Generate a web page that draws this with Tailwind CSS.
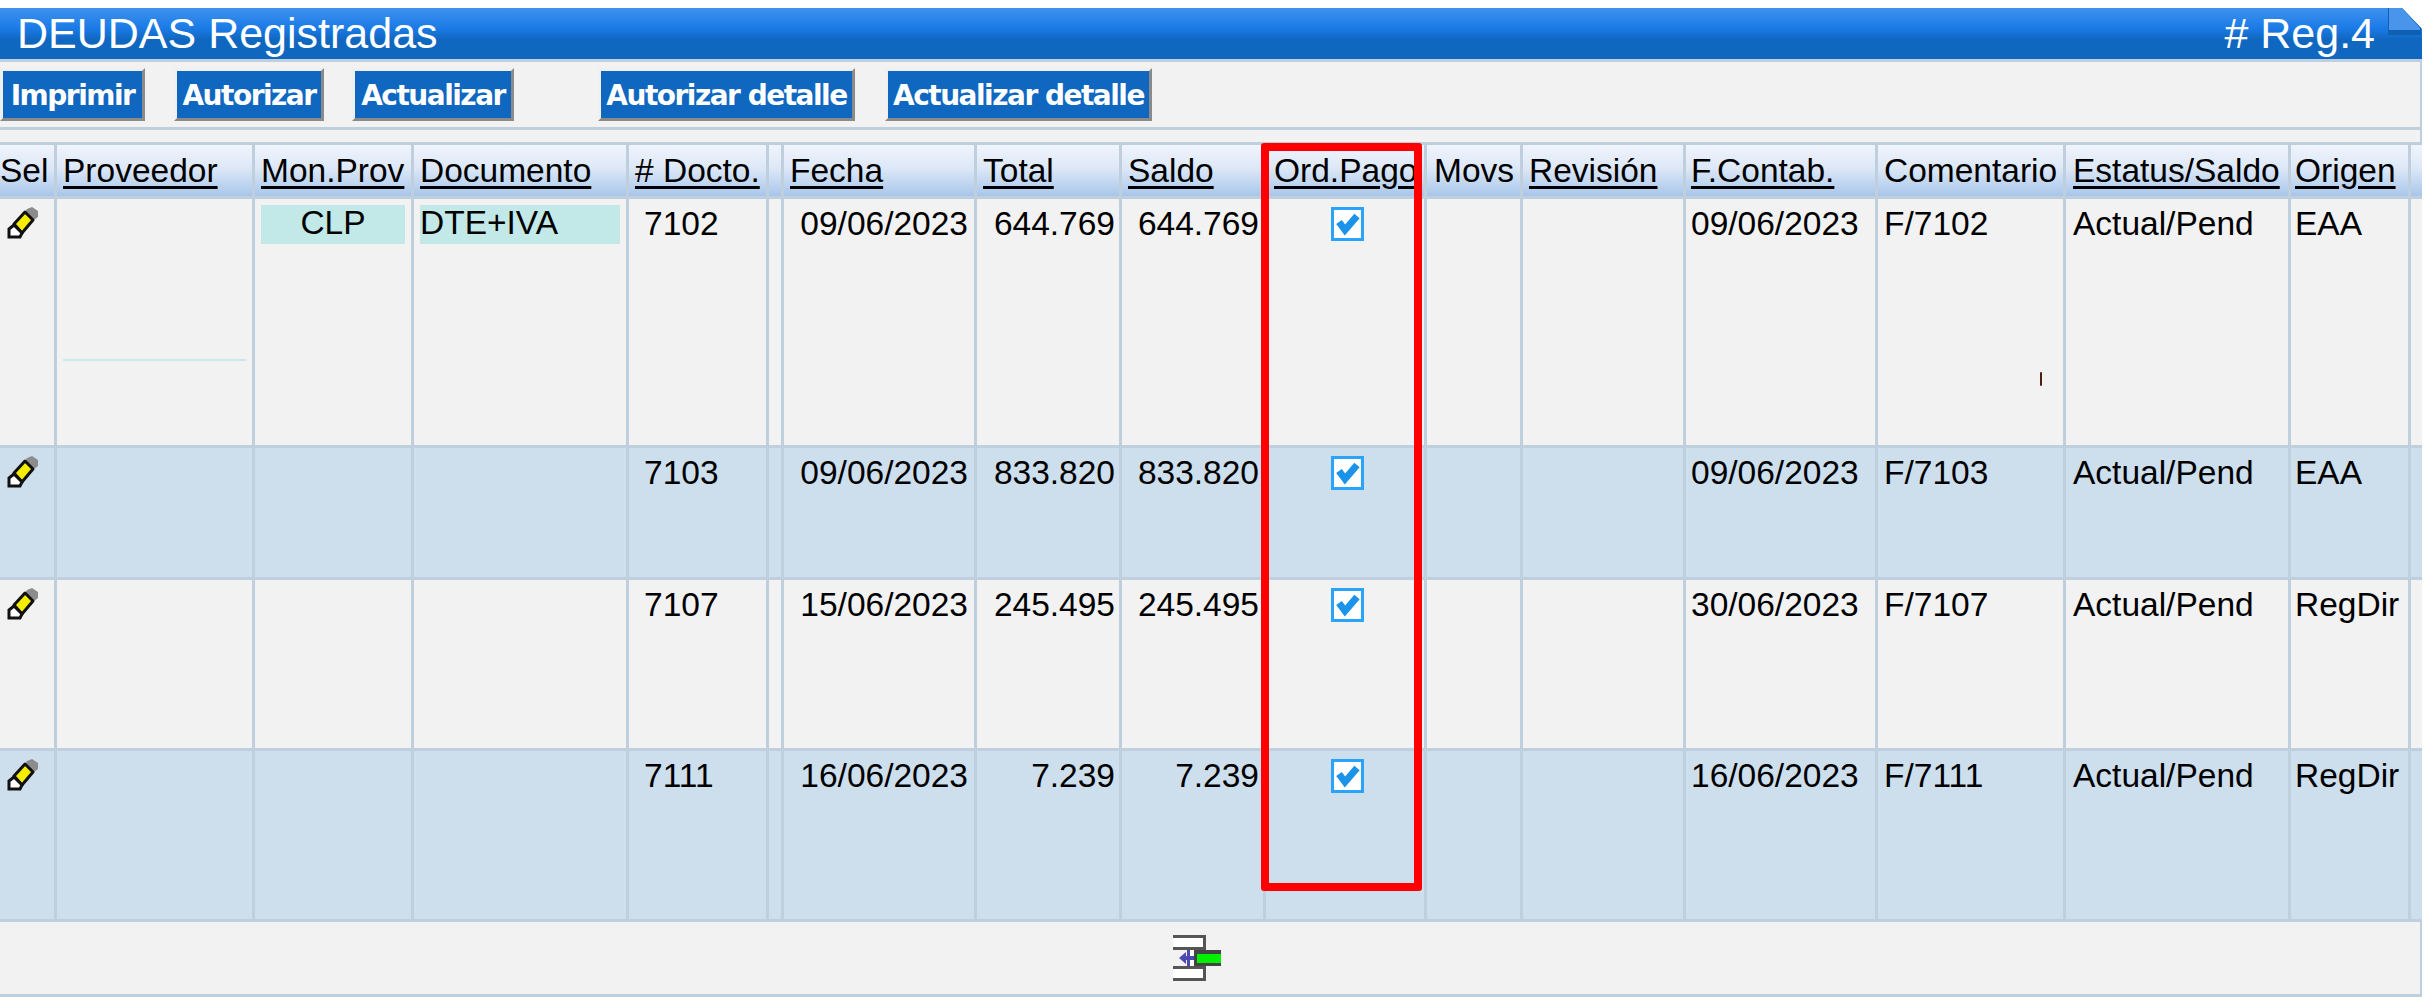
<!DOCTYPE html>
<html lang="es">
<head>
  <meta charset="UTF-8" />
  <title>DEUDAS Registradas</title>
  <script src="https://cdn.jsdelivr.net/npm/@tailwindcss/browser@4"></script>
</head>
<body class="bg-white text-black font-['Liberation_Sans',Arial,sans-serif]">
  <div class="pt-[8px] w-[2422px] h-[1008px] overflow-hidden">
    <!-- barra de titulo -->
    <header class="relative h-[51px] flex items-center justify-between pl-[17px] pr-[47px] text-white text-[43px] bg-[linear-gradient(#3f92ee,#1a7ae6_40%,#1067c0_62%,#1067c0)]">
      <h1 class="font-normal leading-none">DEUDAS Registradas</h1>
      <span class="leading-none">#&nbsp;Reg.4</span>
      <svg class="absolute right-0 top-0" width="34" height="28" viewBox="0 0 34 28">
        <path d="M14 0H34V21Z" fill="#fff"/>
        <path d="M0 0H14L33 20V27H0Z" fill="#0f5fb2"/>
        <path d="M1 0H14L32 20V22H1Z" fill="#4a95ec"/>
      </svg>
    </header>

    <!-- botones -->
    <div class="h-[71px] border-y-[3px] border-r-[2px] border-[#c0cfde] bg-[#f2f2f2] flex items-center text-white text-[28px] font-bold font-['DejaVu_Sans',sans-serif] tracking-[-1.5px] [&>button]:h-[53px] [&>button]:pt-[2px] [&>button]:bg-[#1067c0] [&>button]:border-[3px] [&>button]:border-t-[#f0f0f0] [&>button]:border-l-[#f0f0f0] [&>button]:border-r-[#8a8a8a] [&>button]:border-b-[#8a8a8a]">
      <button class="w-[145px]">Imprimir</button>
      <button class="w-[150px] ml-[29px]">Autorizar</button>
      <button class="w-[162px] ml-[28px]">Actualizar</button>
      <button class="w-[257px] ml-[84px]">Autorizar detalle</button>
      <button class="w-[267px] ml-[30px]">Actualizar detalle</button>
    </div>

    <div class="h-[12px] bg-[#f2f2f2] border-r-[2px] border-[#c0cfde]"></div>

    <!-- tabla -->
    <div class="relative text-[33.5px] leading-[36px]">
      <div class="grid grid-cols-[57px_198px_159px_215px_140px_15px_193px_145px_144px_161px_96px_163px_192px_188px_225px_120px_11px] h-[57px] border-y-[3px] border-[#c0cfde] bg-[linear-gradient(#f0f4fc,#dde8f7_45%,#a8c6ea)] whitespace-nowrap [&>*]:border-r-[3px] [&>*]:border-[#c0cfde] [&>*]:pt-[8px] [&>*]:overflow-hidden [&>u]:no-underline [&>u>span]:underline [&>u>span]:decoration-[3px] [&>u>span]:underline-offset-[4px]">
        <div>Sel</div>
        <u class="pl-[6px]"><span>Proveedor</span></u>
        <u class="pl-[6px]"><span>Mon.Prov</span></u>
        <u class="pl-[6px]"><span>Documento</span></u>
        <u class="pl-[6px]"><span>#&nbsp;Docto.</span></u>
        <div></div>
        <u class="pl-[6px]"><span>Fecha</span></u>
        <u class="pl-[6px]"><span>Total</span></u>
        <u class="pl-[6px]"><span>Saldo</span></u>
        <u class="pl-[8px]"><span>Ord.Pago</span></u>
        <div class="pl-[7px]">Movs</div>
        <u class="pl-[6px]"><span>Revisión</span></u>
        <u class="pl-[5px]"><span>F.Contab.</span></u>
        <div class="pl-[6px]">Comentario</div>
        <u class="pl-[7px]"><span>Estatus/Saldo</span></u>
        <u class="pl-[4px]"><span>Origen</span></u>
        <div class="!border-r-0"></div>
      </div>

      <!-- fila 7102 -->
      <div class="grid grid-cols-[57px_198px_159px_215px_140px_15px_193px_145px_144px_161px_96px_163px_192px_188px_225px_120px_11px] h-[249px] bg-[#f2f2f2] border-b-[3px] border-[#c0cfde] [&>*]:border-r-[3px] [&>*]:border-[#c0cfde] [&>*]:pt-[7px]">
        <div class="pl-[7px] !pt-[6px]"><svg width="32" height="34" viewBox="0 0 32 34"><path d="M20 4L25 2L31 6V12L27 15L18 7Z" fill="#8c8c8c"/><path d="M18 7L26 15L15 28L7 19Z" fill="#f5ee00" stroke="#111" stroke-width="3" stroke-linejoin="round"/><path d="M7 20L2 24V32H13L15 28Z" fill="#fff" stroke="#111" stroke-width="3"/></svg></div>
        <div class="!pt-[160px] pl-[6px]"><div class="h-[2px] w-[183px] bg-[#c6ecec]"></div></div>
        <div class="!pt-[6px] pl-[6px]"><div class="h-[39px] w-[144px] bg-[#c2e9e8] text-center">CLP</div></div>
        <div class="!pt-[6px] pl-[6px]"><div class="h-[39px] w-[200px] bg-[#c2e9e8]">DTE+IVA</div></div>
        <div class="pl-[15px]">7102</div>
        <div></div>
        <div class="pr-[6px] text-right">09/06/2023</div>
        <div class="pr-[4px] text-right">644.769</div>
        <div class="pr-[4px] text-right">644.769</div>
        <div class="pl-[65px] !pt-[8px]"><div class="w-[33px] h-[34px] bg-white border-[3px] border-[#2aa3fb]"><svg width="27" height="28" viewBox="0 0 27 28"><path d="M5 12L11 20L23 6" fill="none" stroke="#1c93ea" stroke-width="7"/></svg></div></div>
        <div></div>
        <div></div>
        <div class="pl-[5px]">09/06/2023</div>
        <div class="pl-[6px] relative">F/7102<span class="absolute left-[162px] top-[173px] w-[2px] h-[14px] rounded-full bg-[#4a1f10]"></span></div>
        <div class="pl-[7px]">Actual/Pend</div>
        <div class="pl-[4px]">EAA</div>
        <div class="!border-r-0"></div>
      </div>

      <!-- fila 7103 -->
      <div class="grid grid-cols-[57px_198px_159px_215px_140px_15px_193px_145px_144px_161px_96px_163px_192px_188px_225px_120px_11px] h-[132px] bg-[#cddeec] border-b-[3px] border-[#c0cfde] [&>*]:border-r-[3px] [&>*]:border-[#c0cfde] [&>*]:pt-[7px]">
        <div class="pl-[7px] !pt-[6px]"><svg width="32" height="34" viewBox="0 0 32 34"><path d="M20 4L25 2L31 6V12L27 15L18 7Z" fill="#8c8c8c"/><path d="M18 7L26 15L15 28L7 19Z" fill="#f5ee00" stroke="#111" stroke-width="3" stroke-linejoin="round"/><path d="M7 20L2 24V32H13L15 28Z" fill="#fff" stroke="#111" stroke-width="3"/></svg></div>
        <div></div>
        <div></div>
        <div></div>
        <div class="pl-[15px]">7103</div>
        <div></div>
        <div class="pr-[6px] text-right">09/06/2023</div>
        <div class="pr-[4px] text-right">833.820</div>
        <div class="pr-[4px] text-right">833.820</div>
        <div class="pl-[65px] !pt-[8px]"><div class="w-[33px] h-[34px] bg-white border-[3px] border-[#2aa3fb]"><svg width="27" height="28" viewBox="0 0 27 28"><path d="M5 12L11 20L23 6" fill="none" stroke="#1c93ea" stroke-width="7"/></svg></div></div>
        <div></div>
        <div></div>
        <div class="pl-[5px]">09/06/2023</div>
        <div class="pl-[6px]">F/7103</div>
        <div class="pl-[7px]">Actual/Pend</div>
        <div class="pl-[4px]">EAA</div>
        <div class="!border-r-0"></div>
      </div>

      <!-- fila 7107 -->
      <div class="grid grid-cols-[57px_198px_159px_215px_140px_15px_193px_145px_144px_161px_96px_163px_192px_188px_225px_120px_11px] h-[171px] bg-[#f2f2f2] border-b-[3px] border-[#c0cfde] [&>*]:border-r-[3px] [&>*]:border-[#c0cfde] [&>*]:pt-[7px]">
        <div class="pl-[7px] !pt-[6px]"><svg width="32" height="34" viewBox="0 0 32 34"><path d="M20 4L25 2L31 6V12L27 15L18 7Z" fill="#8c8c8c"/><path d="M18 7L26 15L15 28L7 19Z" fill="#f5ee00" stroke="#111" stroke-width="3" stroke-linejoin="round"/><path d="M7 20L2 24V32H13L15 28Z" fill="#fff" stroke="#111" stroke-width="3"/></svg></div>
        <div></div>
        <div></div>
        <div></div>
        <div class="pl-[15px]">7107</div>
        <div></div>
        <div class="pr-[6px] text-right">15/06/2023</div>
        <div class="pr-[4px] text-right">245.495</div>
        <div class="pr-[4px] text-right">245.495</div>
        <div class="pl-[65px] !pt-[8px]"><div class="w-[33px] h-[34px] bg-white border-[3px] border-[#2aa3fb]"><svg width="27" height="28" viewBox="0 0 27 28"><path d="M5 12L11 20L23 6" fill="none" stroke="#1c93ea" stroke-width="7"/></svg></div></div>
        <div></div>
        <div></div>
        <div class="pl-[5px]">30/06/2023</div>
        <div class="pl-[6px]">F/7107</div>
        <div class="pl-[7px]">Actual/Pend</div>
        <div class="pl-[4px]">RegDir</div>
        <div class="!border-r-0"></div>
      </div>

      <!-- fila 7111 -->
      <div class="grid grid-cols-[57px_198px_159px_215px_140px_15px_193px_145px_144px_161px_96px_163px_192px_188px_225px_120px_11px] h-[171px] bg-[#cddeec] border-b-[3px] border-[#c0cfde] [&>*]:border-r-[3px] [&>*]:border-[#c0cfde] [&>*]:pt-[7px]">
        <div class="pl-[7px] !pt-[6px]"><svg width="32" height="34" viewBox="0 0 32 34"><path d="M20 4L25 2L31 6V12L27 15L18 7Z" fill="#8c8c8c"/><path d="M18 7L26 15L15 28L7 19Z" fill="#f5ee00" stroke="#111" stroke-width="3" stroke-linejoin="round"/><path d="M7 20L2 24V32H13L15 28Z" fill="#fff" stroke="#111" stroke-width="3"/></svg></div>
        <div></div>
        <div></div>
        <div></div>
        <div class="pl-[15px]">7111</div>
        <div></div>
        <div class="pr-[6px] text-right">16/06/2023</div>
        <div class="pr-[4px] text-right">7.239</div>
        <div class="pr-[4px] text-right">7.239</div>
        <div class="pl-[65px] !pt-[8px]"><div class="w-[33px] h-[34px] bg-white border-[3px] border-[#2aa3fb]"><svg width="27" height="28" viewBox="0 0 27 28"><path d="M5 12L11 20L23 6" fill="none" stroke="#1c93ea" stroke-width="7"/></svg></div></div>
        <div></div>
        <div></div>
        <div class="pl-[5px]">16/06/2023</div>
        <div class="pl-[6px]">F/7111</div>
        <div class="pl-[7px]">Actual/Pend</div>
        <div class="pl-[4px]">RegDir</div>
        <div class="!border-r-0"></div>
      </div>

      <!-- recuadro rojo sobre la columna Ord.Pago -->
      <div class="absolute left-[1261px] top-[1px] w-[161px] h-[748px] border-[8px] border-[#ff0000] rounded-[3px] pointer-events-none"></div>
    </div>

    <!-- pie -->
    <div class="h-[75px] bg-[#f2f2f2] border-b-[3px] border-r-[2px] border-[#c0cfde] flex items-center justify-center">
      <svg class="mr-[26px]" width="48" height="46" viewBox="0 0 48 46">
        <rect x="0" y="0" width="33" height="15" fill="#555"/>
        <rect x="0" y="3" width="30" height="9" fill="#fff"/>
        <rect x="0" y="31" width="33" height="15" fill="#555"/>
        <rect x="0" y="34" width="30" height="9" fill="#fff"/>
        <rect x="14" y="15" width="7" height="16" fill="#fff"/>
        <rect x="21" y="15" width="27" height="16" fill="#444"/>
        <rect x="24" y="19" width="24" height="9" fill="#00f000"/>
        <path d="M6 23L13 17V29Z" fill="#4a4ab0"/>
        <path d="M13 21H21V25H13Z" fill="#4a4ab0"/>
        <path d="M14 15H17V31H14Z" fill="#4a4ab0"/>
      </svg>
    </div>
  </div>
</body>
</html>
